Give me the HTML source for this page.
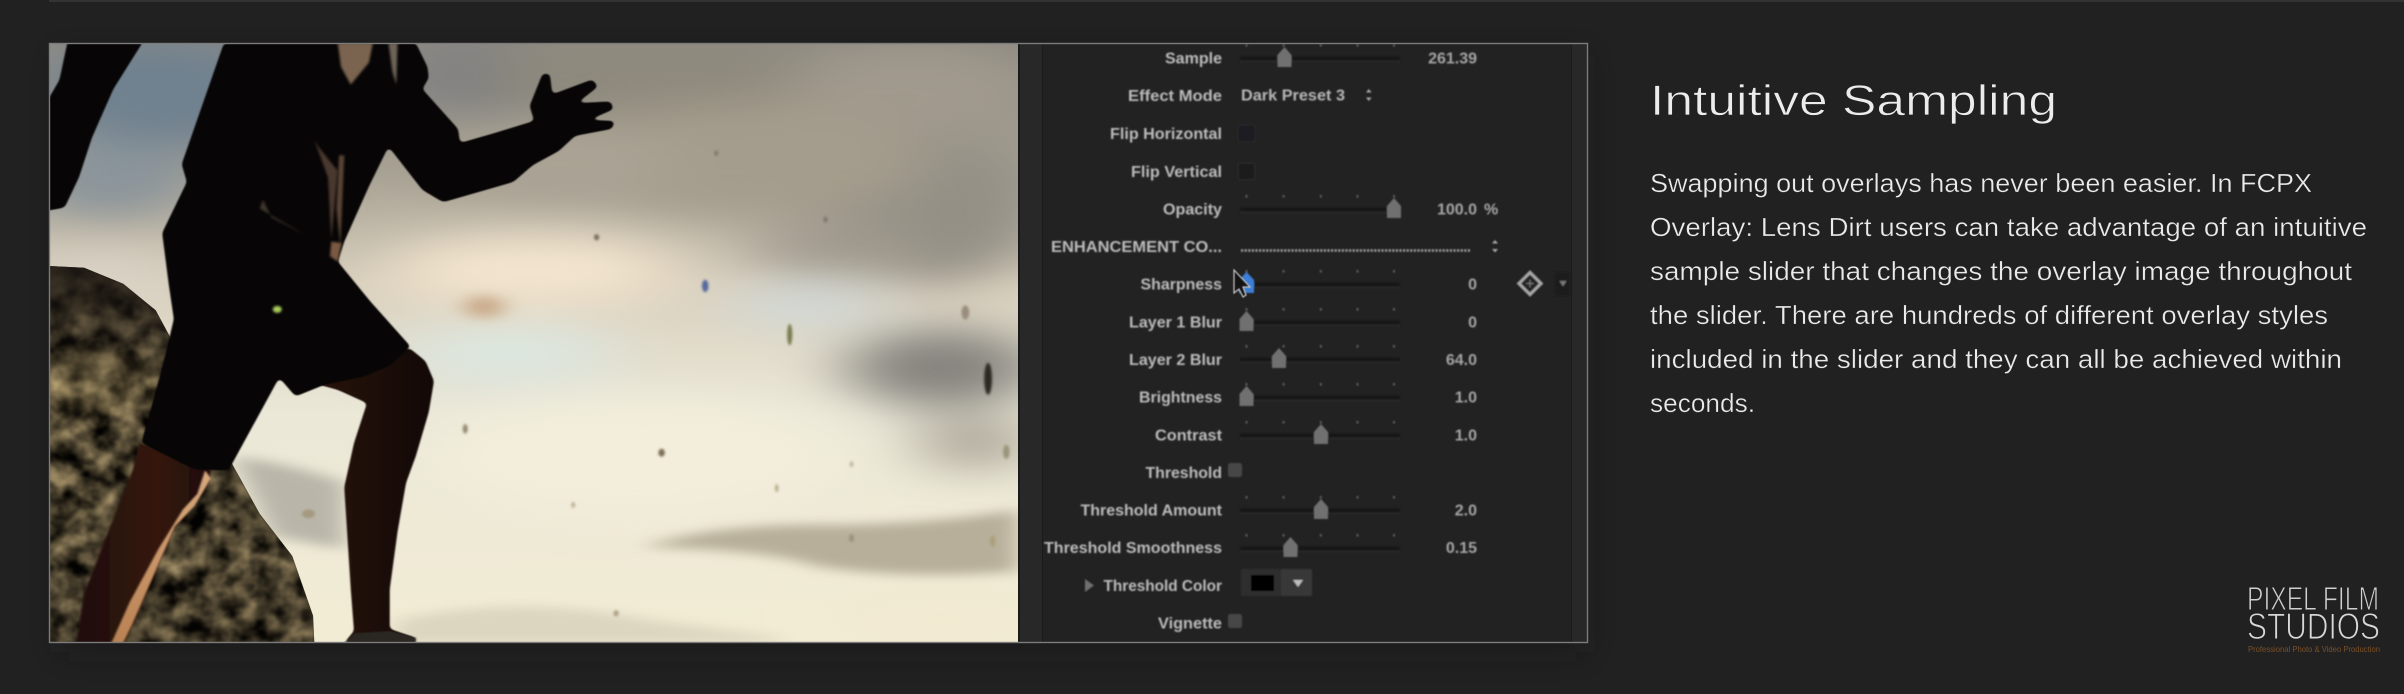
<!DOCTYPE html>
<html lang="en">
<head>
<meta charset="utf-8">
<title>Intuitive Sampling</title>
<style>
html,body{margin:0;padding:0;background:#212121;width:2404px;height:694px;overflow:hidden}
svg{display:block;font-family:"Liberation Sans",sans-serif}
</style>
</head>
<body>
<svg xmlns="http://www.w3.org/2000/svg" width="2404" height="694" viewBox="0 0 2404 694">
<defs>
  <linearGradient id="sky" x1="0" y1="0" x2="0" y2="1">
    <stop offset="0" stop-color="#8f8b83"/>
    <stop offset=".22" stop-color="#a8a294"/>
    <stop offset=".4" stop-color="#d8cfbd"/>
    <stop offset=".62" stop-color="#ebe8d8"/>
    <stop offset="1" stop-color="#f2ecd4"/>
  </linearGradient>
  <linearGradient id="skin" x1="0" y1="0" x2="1" y2="0">
    <stop offset="0" stop-color="#2a120a"/>
    <stop offset=".55" stop-color="#1c0e09"/>
    <stop offset="1" stop-color="#120807"/>
  </linearGradient>
  <linearGradient id="skinL" x1="0" y1="0" x2="1" y2="0">
    <stop offset="0" stop-color="#1f0d07"/>
    <stop offset=".6" stop-color="#35180d"/>
    <stop offset="1" stop-color="#1f0d08"/>
  </linearGradient>
  <linearGradient id="edge" x1="0" y1="0" x2="0" y2="1">
    <stop offset="0" stop-color="#d8a97c"/>
    <stop offset="1" stop-color="#b98254"/>
  </linearGradient>
  <linearGradient id="rockDark" x1="0" y1="0" x2="0" y2="1">
    <stop offset="0" stop-color="#1c1713" stop-opacity=".85"/>
    <stop offset=".16" stop-color="#1c1713" stop-opacity=".5"/>
    <stop offset=".3" stop-color="#1c1713" stop-opacity="0"/>
    <stop offset="1" stop-color="#1c1713" stop-opacity=".15"/>
  </linearGradient>
  <filter id="b40" x="-60%" y="-60%" width="220%" height="220%"><feGaussianBlur stdDeviation="55 42"/></filter>
  <filter id="b15" x="-50%" y="-50%" width="200%" height="200%"><feGaussianBlur stdDeviation="18 12"/></filter>
  <filter id="b2" x="-10%" y="-10%" width="120%" height="120%"><feGaussianBlur stdDeviation="1.6 1.8"/></filter>
  <filter id="rnd" x="-5%" y="-5%" width="110%" height="110%" color-interpolation-filters="sRGB">
    <feGaussianBlur stdDeviation="4 5"/>
    <feComponentTransfer><feFuncA type="linear" slope="7" intercept="-3"/></feComponentTransfer>
    <feGaussianBlur stdDeviation="1.2 1.4"/>
  </filter>
  <filter id="b1" x="-100%" y="-100%" width="300%" height="300%"><feGaussianBlur stdDeviation="2 3"/></filter>
  <filter id="rockTex" x="0" y="0" width="100%" height="100%" color-interpolation-filters="sRGB">
    <feTurbulence type="fractalNoise" baseFrequency=".028 .02" numOctaves="4" seed="11"/>
    <feColorMatrix type="matrix" values="1.15 0 0 0 -.29  1.02 0 0 0 -.26  .75 0 0 0 -.2  0 0 0 0 1"/>
    <feComposite in2="SourceGraphic" operator="in"/>
    <feGaussianBlur stdDeviation="2 2.6"/>
  </filter>
  <filter id="soft" filterUnits="userSpaceOnUse" x="1020" y="40" width="570" height="606"><feGaussianBlur stdDeviation=".8"/></filter>
  <filter id="shadow" x="-5%" y="-5%" width="110%" height="115%"><feGaussianBlur stdDeviation="14"/></filter>
  <clipPath id="panelclip"><rect x="1019" y="44" width="568" height="598"/></clipPath>
  <clipPath id="rockclip"><path d="M76 600L130 604 190 640 240 700 262 760 280 900 355 1040 400 1160 450 1255 482 1390 484 1452H76Z"/></clipPath>
  <path id="knob" d="M-7 9H7V-3L0-11-7-3Z" fill="#707070"/>
  <g id="tr">
    <rect x="1240" y="-1.5" width="160" height="3.4" fill="#121212"/>
    <rect x="1240" y="3" width="160" height="1" fill="#2a2a2a"/>
    <g fill="#5c5c5c">
      <rect x="1245.5" y="-14" width="2" height="2.6"/><rect x="1282.6" y="-14" width="2" height="2.6"/>
      <rect x="1319.8" y="-14" width="2" height="2.6"/><rect x="1356.5" y="-14" width="2" height="2.6"/>
      <rect x="1393" y="-14" width="2" height="2.6"/>
    </g>
  </g>
</defs>

<rect width="2404" height="694" fill="#212121"/>
<rect x="49" y="0" width="2356" height="2" fill="#333"/>
<rect x="60" y="56" width="1525" height="596" fill="#181818" opacity=".4" filter="url(#shadow)"/>

<!-- PHOTO -->
<svg x="49" y="43" width="969" height="600" viewBox="76 96 1490 1356" preserveAspectRatio="none">
  <rect x="76" y="96" width="1490" height="1356" fill="url(#sky)"/>
  <g filter="url(#b40)">
    <ellipse cx="250" cy="210" rx="190" ry="130" fill="#70818f"/>
    <ellipse cx="170" cy="400" rx="130" ry="90" fill="#8a949b"/>
    <ellipse cx="740" cy="170" rx="130" ry="90" fill="#7f8081"/>
    <ellipse cx="1020" cy="170" rx="280" ry="90" fill="#8e897d"/>
    <ellipse cx="1400" cy="210" rx="190" ry="110" fill="#a09a8d"/>
    <ellipse cx="1430" cy="470" rx="170" ry="170" fill="#938f85"/>
    <ellipse cx="1150" cy="360" rx="280" ry="130" fill="#a49d8d"/>
    <ellipse cx="850" cy="370" rx="180" ry="90" fill="#aaa394"/>
    <ellipse cx="150" cy="620" rx="100" ry="50" fill="#dad4c9"/>
    <ellipse cx="820" cy="610" rx="220" ry="80" fill="#f3e4cd"/>
    <ellipse cx="1290" cy="560" rx="140" ry="60" fill="#a09a8e"/>
    <ellipse cx="780" cy="800" rx="170" ry="70" fill="#dce6df"/>
    <ellipse cx="1240" cy="690" rx="120" ry="40" fill="#cfdadc"/>
    <ellipse cx="1450" cy="830" rx="150" ry="90" fill="#85837e"/>
    <ellipse cx="1500" cy="1000" rx="90" ry="60" fill="#aaa496"/>
    <ellipse cx="980" cy="1030" rx="320" ry="130" fill="#f3eedb"/>
    <ellipse cx="1450" cy="1390" rx="160" ry="50" fill="#f2e9d0"/>
  </g>
  <g filter="url(#b15)">
    <path d="M990 1235Q1100 1180 1290 1185Q1450 1180 1566 1150V1290Q1400 1310 1260 1280Q1180 1240 990 1235Z" fill="#b8af9a"/>
    <path d="M360 1030Q460 1050 530 1090V1240L420 1210Z" fill="#b9b6a9"/>
    <path d="M610 1400Q800 1340 1000 1400L1200 1440V1452H610Z" fill="#dcd5c0"/>
    <ellipse cx="745" cy="692" rx="30" ry="26" fill="#c9a987"/>
  </g>

  <!-- rock -->
  <path d="M76 600L130 604 190 640 240 700 262 760 280 900 355 1040 400 1160 450 1255 482 1390 484 1452H76Z" fill="#3d3429"/>
  <g clip-path="url(#rockclip)">
    <path d="M76 600L130 604 190 640 240 700 262 760 280 900 355 1040 400 1160 450 1255 482 1390 484 1452H76Z" fill="#000" filter="url(#rockTex)"/>
    <ellipse cx="150" cy="860" rx="75" ry="80" fill="#8a7850" opacity=".28" filter="url(#b15)"/>
  </g>
  <path d="M76 600L130 604 190 640 240 700 262 760 280 900 355 1040 400 1160 450 1255 482 1390 484 1452H76Z" fill="url(#rockDark)"/>

  <!-- right leg -->
  <path d="M470 860L630 785 655 815 668 860 660 930 640 1030 625 1090 612 1200 600 1330 600 1420 640 1440 640 1452H530L545 1425 540 1330 530 1100 545 1000 565 910 520 880Z" fill="url(#skin)" filter="url(#rnd)"/>
  <!-- left leg -->
  <path d="M215 1000L325 1060 322 1090 300 1140 270 1190 240 1290 205 1410 192 1452H118L130 1340 170 1190 205 1060Z" fill="url(#skinL)" filter="url(#b2)"/>
  <path d="M316 1062L325 1080 300 1142 270 1188 238 1295 204 1410 190 1452H172L200 1360 244 1240 282 1150 304 1115Z" fill="url(#edge)" filter="url(#b2)"/>

  <!-- body -->
  <g filter="url(#rnd)" fill="#070505">
    <path d="M345 96L640 96 658 150 660 175 650 200 705 290 708 322 760 300 822 272 815 238 835 165 846 165 850 212 912 178 920 195 888 232 940 228 944 246 906 270 946 272 942 290 885 306 860 340 820 372 790 410 682 456 650 428 598 330 568 420 530 545 520 590 570 680 632 782 600 825 560 850 500 868 455 895 430 852 352 1062 300 1060 218 1000 250 830 268 720 260 640 250 525 288 410 280 370Z"/>
    <path d="M105 90H222L175 200 142 310 122 400 100 468 70 476V235L92 180Z"/>
  </g>
  <path d="M520 96L574 96 568 140 540 190 525 150Z" fill="#7a6350" filter="url(#b1)"/>
  <path d="M598 96L612 96 610 190 604 160Z" fill="#6d6357" filter="url(#b1)"/>
  <path d="M484 315L490 330 520 385 510 540 505 400Z" fill="#4a382e" filter="url(#b1)"/>
  <path d="M522 350L530 350 524 555 518 470Z" fill="#5a4436" filter="url(#b1)"/>
  <path d="M405 450L418 490 470 530 400 470Z" fill="#3e362f" filter="url(#b1)"/>
  <path d="M510 545L526 548 520 590 508 578Z" fill="#7a5a42" filter="url(#b1)"/>
  <path d="M530 1452L545 1430 600 1425 640 1440 640 1452Z" fill="#2b2621" filter="url(#b2)"/>

  <!-- specks -->
  <g filter="url(#b1)">
    <ellipse cx="427" cy="698" rx="7" ry="8" fill="#a8cc5c"/>
    <ellipse cx="1085" cy="645" rx="5" ry="14" fill="#56699e"/>
    <ellipse cx="1215" cy="755" rx="4" ry="24" fill="#7a7a50"/>
    <ellipse cx="1520" cy="855" rx="6" ry="36" fill="#2c2a22"/>
    <ellipse cx="918" cy="535" rx="4" ry="7" fill="#7a7060"/>
    <ellipse cx="1102" cy="345" rx="3" ry="6" fill="#7d776c"/>
    <ellipse cx="1270" cy="495" rx="3" ry="7" fill="#7a7468"/>
    <ellipse cx="1018" cy="1022" rx="5" ry="9" fill="#7a7058"/>
    <ellipse cx="716" cy="968" rx="4" ry="11" fill="#9a8e74"/>
    <ellipse cx="1195" cy="1102" rx="3" ry="9" fill="#bdb092"/>
    <ellipse cx="1310" cy="1048" rx="3" ry="7" fill="#c2b99e"/>
    <ellipse cx="882" cy="1140" rx="3" ry="7" fill="#bdb196"/>
    <ellipse cx="948" cy="1385" rx="4" ry="7" fill="#aea186"/>
    <ellipse cx="1527" cy="1222" rx="4" ry="13" fill="#ad9f7c"/>
    <ellipse cx="1485" cy="705" rx="6" ry="16" fill="#9a8d7d"/>
    <ellipse cx="1548" cy="1020" rx="5" ry="16" fill="#9a957a"/>
    <ellipse cx="1310" cy="1215" rx="4" ry="9" fill="#9c927a"/>
    <ellipse cx="475" cy="1160" rx="10" ry="10" fill="#a59a80"/>
  </g>
</svg>

<!-- PANEL -->
<rect x="1018" y="43" width="570" height="600" fill="#222"/>
<rect x="1018" y="43" width="2" height="600" fill="#1a1a1a"/>
<rect x="1020" y="43" width="22" height="600" fill="#282828"/>
<rect x="1042" y="43" width="1" height="600" fill="#1b1b1b"/>
<rect x="1571" y="43" width="1" height="600" fill="#1b1b1b"/>
<rect x="1572" y="43" width="16" height="600" fill="#282828"/>

<g clip-path="url(#panelclip)">
<g filter="url(#soft)">
  <g fill="#4c4c4c"><rect x="1245.5" y="44" width="2" height="2"/><rect x="1282.6" y="44" width="2" height="2"/><rect x="1319.8" y="44" width="2" height="2"/><rect x="1356.5" y="44" width="2" height="2"/><rect x="1393" y="44" width="2" height="2"/></g>

  <g fill="#bcbcbc" font-weight="700" font-size="16">
    <text x="1165" y="63.5" textLength="57" lengthAdjust="spacingAndGlyphs">Sample</text>
    <text x="1128" y="101" textLength="94" lengthAdjust="spacingAndGlyphs">Effect Mode</text>
    <text x="1110" y="139" textLength="112" lengthAdjust="spacingAndGlyphs">Flip Horizontal</text>
    <text x="1131" y="177" textLength="91" lengthAdjust="spacingAndGlyphs">Flip Vertical</text>
    <text x="1163" y="214.5" textLength="59" lengthAdjust="spacingAndGlyphs">Opacity</text>
    <text x="1051" y="252" textLength="171" lengthAdjust="spacingAndGlyphs">ENHANCEMENT CO...</text>
    <text x="1140.500" y="289.500" textLength="81.500" lengthAdjust="spacingAndGlyphs">Sharpness</text>
    <text x="1129" y="327.500" textLength="93" lengthAdjust="spacingAndGlyphs">Layer 1 Blur</text>
    <text x="1129" y="365" textLength="93" lengthAdjust="spacingAndGlyphs">Layer 2 Blur</text>
    <text x="1139" y="402.500" textLength="83" lengthAdjust="spacingAndGlyphs">Brightness</text>
    <text x="1155" y="440.500" textLength="67" lengthAdjust="spacingAndGlyphs">Contrast</text>
    <text x="1145.500" y="478" textLength="76.500" lengthAdjust="spacingAndGlyphs">Threshold</text>
    <text x="1080.500" y="515.500" textLength="141.500" lengthAdjust="spacingAndGlyphs">Threshold Amount</text>
    <text x="1044" y="553" textLength="178" lengthAdjust="spacingAndGlyphs">Threshold Smoothness</text>
    <text x="1103.500" y="591" textLength="118.500" lengthAdjust="spacingAndGlyphs">Threshold Color</text>
    <text x="1158" y="628.500" textLength="64" lengthAdjust="spacingAndGlyphs">Vignette</text>
  </g>

  <use href="#tr" y="58"/><use href="#knob" x="1284.500" y="58"/>
  <use href="#tr" y="209"/><use href="#knob" x="1394" y="209"/>
  <use href="#tr" y="284"/>
  <use href="#tr" y="322"/><use href="#knob" x="1246.500" y="322"/>
  <use href="#tr" y="359"/><use href="#knob" x="1279" y="359"/>
  <use href="#tr" y="397"/><use href="#knob" x="1246.500" y="397"/>
  <use href="#tr" y="435"/><use href="#knob" x="1321" y="435"/>
  <use href="#tr" y="510"/><use href="#knob" x="1321" y="510"/>
  <use href="#tr" y="548"/><use href="#knob" x="1290.500" y="548"/>

  <g fill="#a4a4a4" font-weight="700" font-size="16" text-anchor="end">
    <text x="1477" y="63.500">261.39</text>
    <text x="1477" y="214.500">100.0</text>
    <text x="1477" y="289.500">0</text>
    <text x="1477" y="327.500">0</text>
    <text x="1477" y="365">64.0</text>
    <text x="1477" y="402.500">1.0</text>
    <text x="1477" y="440.500">1.0</text>
    <text x="1477" y="515.500">2.0</text>
    <text x="1477" y="553">0.15</text>
  </g>
  <text x="1484" y="214.500" fill="#a8a8a8" font-weight="700" font-size="16">%</text>
  <text x="1241" y="100.500" textLength="104" lengthAdjust="spacingAndGlyphs" fill="#b8b8b8" font-weight="700" font-size="16">Dark Preset 3</text>

  <path d="M1366 92.500l2.800-3.500 2.800 3.500zM1366 97.500l2.800 3.500 2.800-3.500z" fill="#a8a8a8"/>
  <path d="M1492 243.500l3-3.500 3 3.500zM1492 249l3 3.500 3-3.500z" fill="#a8a8a8"/>
  <line x1="1241" y1="250.500" x2="1471" y2="250.500" stroke="#a0a0a0" stroke-width="2.400" stroke-dasharray="2.200 1.400"/>

  <rect x="1238" y="125" width="17" height="17" rx="3" fill="#1d1d21" stroke="#2b2b2b"/>
  <rect x="1238" y="163" width="17" height="17" rx="3" fill="#1c1c1c" stroke="#2d2d2d"/>
  <rect x="1228" y="463" width="14" height="14" rx="2.500" fill="#474747"/>
  <rect x="1228" y="614" width="14" height="14" rx="2.500" fill="#474747"/>

  <path d="M1239 293H1254V280L1246.500 272 1239 280Z" fill="#3d7fd6"/>
  <path d="M1530 272.500L1541 283.500 1530 294.500 1519 283.500Z" fill="none" stroke="#a4a4a4" stroke-width="3.400"/>
  <path d="M1530 279.500V287.500M1526 283.500H1534" stroke="#777" stroke-width="1.500"/>
  <rect x="1555" y="272" width="15" height="24" rx="2" fill="#1c1c1c"/>
  <path d="M1559.500 281h7l-3.500 5.500z" fill="#777"/>

  <path d="M1085 579l9 6.500-9 6.500z" fill="#6f6f6f"/>
  <rect x="1241" y="569" width="71" height="27" rx="2" fill="#2d2d2d"/>
  <rect x="1281" y="569" width="31" height="27" rx="2" fill="#383838"/>
  <rect x="1251" y="575" width="23" height="16" fill="#000"/>
  <path d="M1293 580h10l-5 7z" fill="#bdbdbd"/>
</g>
<path d="M1234 270L1234 293 1239 289 1243 297 1246 295 1243 287 1250 287Z" fill="#141414" stroke="#c9c9c9" stroke-width="1.200" style="filter:blur(.5px)"/>
</g>

<!-- frame -->
<rect x="49.500" y="43.500" width="1538" height="599" fill="none" stroke="#7c7c7c" stroke-width="1.400"/>

<!-- COPY -->
<text x="1650" y="115" font-size="43" fill="#ececec" stroke="#212121" stroke-width=".7" textLength="407" lengthAdjust="spacingAndGlyphs">Intuitive Sampling</text>
<g font-size="26" fill="#ebebeb" stroke="#212121" stroke-width=".35">
  <text x="1650" y="192" textLength="662" lengthAdjust="spacingAndGlyphs">Swapping out overlays has never been easier. In FCPX</text>
  <text x="1650" y="236" textLength="717" lengthAdjust="spacingAndGlyphs">Overlay: Lens Dirt users can take advantage of an intuitive</text>
  <text x="1650" y="280" textLength="702" lengthAdjust="spacingAndGlyphs">sample slider that changes the overlay image throughout</text>
  <text x="1650" y="324" textLength="678" lengthAdjust="spacingAndGlyphs">the slider. There are hundreds of different overlay styles</text>
  <text x="1650" y="368" textLength="692" lengthAdjust="spacingAndGlyphs">included in the slider and they can all be achieved within</text>
  <text x="1650" y="412" textLength="105" lengthAdjust="spacingAndGlyphs">seconds.</text>
</g>

<!-- LOGO -->
<text x="2247" y="610" font-size="33" fill="#d0d0d0" stroke="#212121" stroke-width="1" textLength="132" lengthAdjust="spacingAndGlyphs">PIXEL FILM</text>
<text x="2247" y="639" font-size="37" fill="#d8d8d8" stroke="#212121" stroke-width="1.100" textLength="133" lengthAdjust="spacingAndGlyphs">STUDIOS</text>
<text x="2248" y="652" font-size="8.500" fill="#7a5028" textLength="132" lengthAdjust="spacingAndGlyphs">Professional Photo &amp; Video Production</text>
</svg>
</body>
</html>
